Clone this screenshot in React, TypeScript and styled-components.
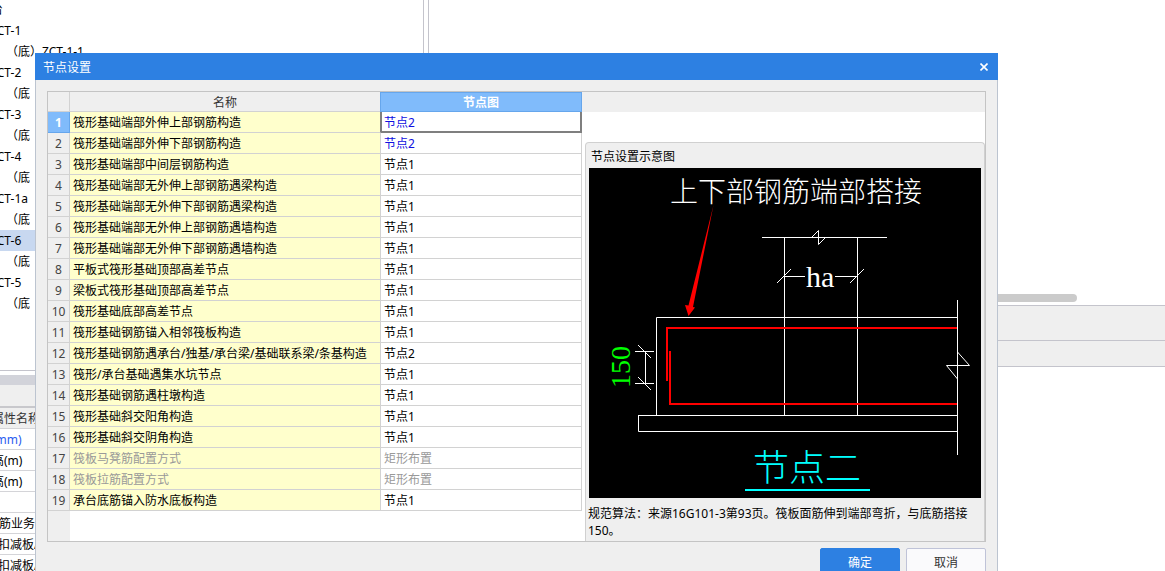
import React from "react";
import styled, { createGlobalStyle, css } from "styled-components";

const Global = createGlobalStyle`
  *, *::before, *::after { box-sizing: border-box; }
  body { margin: 0; overflow: hidden; background: #fff; }
  body, button, table {
    font-family: "Noto Sans", "Noto Sans CJK SC", sans-serif;
    font-size: 12px;
    color: #000;
  }
`;

const Page = styled.div`
  position: relative;
  display: flex;
  gap: 4px;
  height: 100vh;
  overflow: hidden;
`;

const Side = styled.aside`
  display: flex;
  flex-direction: column;
  width: 424px;
  border-right: 1px solid #c4c4cc;
  overflow: hidden;
  white-space: nowrap;
`;

const Tree = styled.ul`
  list-style: none;
  flex: none;
  height: 371px;
  margin: 0;
  padding: 0;
  overflow: hidden;
  border-bottom: 1px solid #c4c4cc;
`;

const TreeItem = styled.li<{ $indent: number; $selected?: boolean }>`
  height: 21px;
  padding-top: 1px;
  line-height: 20px;
  text-indent: ${(p) => p.$indent}px;
  background: ${(p) => (p.$selected ? "#c8d8f0" : "transparent")};
  &:first-child { margin-top: -1px; }
`;

const SideScroll = styled.div`
  flex: none;
  height: 10px;
  margin-top: 4px;
  background: #d2d3da;
`;

const SideCaption = styled.div`
  flex: none;
  height: 23px;
  background: #efefef;
  border-bottom: 2px solid #c8c8cc;
`;

const PropRow = styled.div<{ $indent: number; $tone?: "head" | "link" }>`
  flex: none;
  height: 21px;
  line-height: 21px;
  text-indent: ${(p) => p.$indent}px;
  border-bottom: 1px solid #d4d4d8;
  ${(p) => p.$tone === "head" && css`background: #efefef; color: #333;`}
  ${(p) => p.$tone === "link" && css`color: #2a5cf0;`}
`;

const Workspace = styled.main`
  flex: 1;
  display: flex;
  flex-direction: column;
  border-left: 1px solid #c4c4cc;
`;

const Canvas = styled.div`
  display: flex;
  align-items: flex-end;
  height: 305px;
  padding-bottom: 3px;
`;

const ScrollThumb = styled.div`
  width: 648px;
  height: 8px;
  border-radius: 4px;
  background: #cbcbcb;
`;

const Strip = styled.div<{ $height: number }>`
  height: ${(p) => p.$height}px;
  background: #efefef;
  border-top: 1px solid #c4c4cc;
`;

const Below = styled.div`
  flex: 1;
  border-top: 1px solid #c4c4cc;
`;

const Dialog = styled.section`
  position: absolute;
  top: 53px;
  left: 35px;
  right: 167px;
  background: #efefef;
`;

const TitleBar = styled.header`
  display: flex;
  align-items: center;
  justify-content: space-between;
  height: 27px;
  padding: 0 8px;
  background: #2d80e2;
  color: #fff;
`;

const Title = styled.h1`
  margin: 0;
  font-size: 12px;
  font-weight: 400;
`;

const CloseButton = styled.button`
  display: flex;
  align-items: center;
  justify-content: center;
  width: 12px;
  height: 20px;
  padding: 0;
  border: 0;
  background: none;
`;

const DialogBody = styled.div`
  padding: 11px 11px 12px;
  border: 1px solid #bcc4d0;
  border-top: 0;
`;

const Frame = styled.div`
  display: flex;
  height: 451px;
  border: 1px solid #c4c4c4;
  background: #fff;
`;

const GridPane = styled.div`
  display: flex;
  flex-direction: column;
  width: 534px;
`;

const GridFiller = styled.div`
  flex: 1;
  width: 22px;
  background: #efefef;
`;

const Grid = styled.table`
  width: 100%;
  table-layout: fixed;
  border-collapse: separate;
  border-spacing: 0;
`;

const line = "#d2d2d2";

const ColHead = styled.th<{ $active?: boolean }>`
  height: 20px;
  padding: 2px 0 0;
  line-height: 17px;
  font-weight: 400;
  color: #333;
  background: #efefef;
  border: solid ${line};
  border-width: 0 1px 1px 0;
  ${(p) =>
    p.$active &&
    css`
      padding-top: 1px;
      font-weight: 700;
      color: #fff;
      background: #80bbfb;
      border: 1px solid #66a6ec;
      border-left: 0;
      box-shadow: -1px 0 0 #66a6ec;
    `}
`;

const RowHead = styled.th<{ $active?: boolean }>`
  height: 21px;
  padding: 3px 0 0;
  line-height: 16px;
  vertical-align: top;
  font-weight: ${(p) => (p.$active ? 700 : 400)};
  color: ${(p) => (p.$active ? "#fff" : "#444")};
  background: ${(p) => (p.$active ? "#80bbfb" : "#efefef")};
  border: solid ${(p) => (p.$active ? "#66a6ec" : line)};
  border-width: 0 1px 1px 0;
`;

type Tone = "normal" | "link" | "off";
const tones: Record<Tone, string> = { normal: "#000", link: "#0f0fe0", off: "#999" };

const Cell = styled.td<{ $tone: Tone }>`
  height: 21px;
  padding: 3px 0 0 3px;
  line-height: 16px;
  vertical-align: top;
  white-space: nowrap;
  color: ${(p) => tones[p.$tone]};
  border: solid ${line};
  border-width: 0 1px 1px 0;
`;

const NameCell = styled(Cell)<{ $active?: boolean }>`
  background: #ffffcc;
  ${(p) => p.$active && css`border-right-color: #7f7f7f;`}
`;

const NodeCell = styled(Cell)<{ $active?: boolean }>`
  ${(p) =>
    p.$active &&
    css`
      padding-left: 2px;
      border: solid #7f7f7f;
      border-width: 0 2px 2px 1px;
    `}
`;

const PreviewPane = styled.div`
  flex: 1;
  display: flex;
  flex-direction: column;
`;

const HeadFill = styled.div`
  height: 20px;
  margin-bottom: 30px;
  background: #efefef;
`;

const Preview = styled.section`
  flex: 1;
  margin-left: 3px;
  padding: 0 3px;
  background: #efefef;
  border: 1px solid #d0d0d0;
  border-bottom: 0;
  border-radius: 4px 4px 0 0;
`;

const PreviewTitle = styled.h2`
  margin: 0;
  padding-left: 2px;
  height: 25px;
  line-height: 28px;
  font-size: 12px;
  font-weight: 400;
`;

const Drawing = styled.svg`
  display: block;
  width: 100%;
  height: 330px;
  background: #000;
`;

const Note = styled.p`
  margin: 7px 0 0 -1px;
  line-height: 17px;
`;

const Actions = styled.footer`
  display: flex;
  justify-content: flex-end;
  gap: 6px;
  padding-top: 6px;
`;

const ActionButton = styled.button<{ $primary?: boolean }>`
  width: 80px;
  height: 28px;
  padding: 0;
  border-radius: 2px;
  border: 1px solid ${(p) => (p.$primary ? "#2d80e2" : "#bfc3d8")};
  background: ${(p) => (p.$primary ? "#2d80e2" : "#fafafc")};
  color: ${(p) => (p.$primary ? "#fff" : "#333")};
`;

const tree: { text: string; indent: number; selected?: boolean }[] = [
  { text: "承台", indent: -21 },
  { text: "ZCT-1", indent: -10 },
  { text: "（底）ZCT-1-1", indent: 6 },
  { text: "ZCT-2", indent: -10 },
  { text: "（底", indent: 6 },
  { text: "ZCT-3", indent: -10 },
  { text: "（底", indent: 6 },
  { text: "ZCT-4", indent: -10 },
  { text: "（底", indent: 6 },
  { text: "ZCT-1a", indent: -10 },
  { text: "（底", indent: 6 },
  { text: "ZCT-6", indent: -10, selected: true },
  { text: "（底", indent: 6 },
  { text: "ZCT-5", indent: -10 },
  { text: "（底", indent: 6 },
];

const props: { text: string; indent: number; tone?: "head" | "link" }[] = [
  { text: "属性名称", indent: -8, tone: "head" },
  { text: "(mm)", indent: -8, tone: "link" },
  { text: "高(m)", indent: -8 },
  { text: "高(m)", indent: -8 },
  { text: "", indent: 0 },
  { text: "筋业务", indent: -1 },
  { text: "扣减板/", indent: -2 },
  { text: "扣减板/", indent: -2 },
];

const rows: [string, string, Tone?][] = [
  ["筏形基础端部外伸上部钢筋构造", "节点2", "link"],
  ["筏形基础端部外伸下部钢筋构造", "节点2", "link"],
  ["筏形基础端部中间层钢筋构造", "节点1"],
  ["筏形基础端部无外伸上部钢筋遇梁构造", "节点1"],
  ["筏形基础端部无外伸下部钢筋遇梁构造", "节点1"],
  ["筏形基础端部无外伸上部钢筋遇墙构造", "节点1"],
  ["筏形基础端部无外伸下部钢筋遇墙构造", "节点1"],
  ["平板式筏形基础顶部高差节点", "节点1"],
  ["梁板式筏形基础顶部高差节点", "节点1"],
  ["筏形基础底部高差节点", "节点1"],
  ["筏形基础钢筋锚入相邻筏板构造", "节点1"],
  ["筏形基础钢筋遇承台/独基/承台梁/基础联系梁/条基构造", "节点2"],
  ["筏形/承台基础遇集水坑节点", "节点1"],
  ["筏形基础钢筋遇柱墩构造", "节点1"],
  ["筏形基础斜交阳角构造", "节点1"],
  ["筏形基础斜交阴角构造", "节点1"],
  ["筏板马凳筋配置方式", "矩形布置", "off"],
  ["筏板拉筋配置方式", "矩形布置", "off"],
  ["承台底筋锚入防水底板构造", "节点1"],
];

const serif = '"Liberation Serif", "Noto Sans CJK SC", serif';
const cjk = '"Noto Sans CJK SC", sans-serif';

function NodeDrawing() {
  return (
    <Drawing viewBox="0 0 392 330" role="img" aria-label="节点二">
      <text x="81" y="34" fontSize="28" fontWeight="300" fontFamily={cjk} fill="#fff">上下部钢筋端部搭接</text>
      {/* column with its break mark and the width dimension */}
      <g stroke="#fff" fill="none">
        <path d="M173 69.500H298M195.500 69V247M268.500 69V247" />
        <path d="M222.500 69.500L229.500 62.500V76.500L236.500 69.500" />
        <path d="M195 108.500H216M246 108.500H269M188 115L202 101M261 115L275 101" />
        {/* raft outline and bedding */}
        <path d="M67.500 247V149.500H368M49.500 247.500H368M49.500 247V263.500H368" />
        <path d="M368.500 132V287M368.500 184L380.500 197.500H357.500L368.500 211" />
        {/* 150 dimension */}
        <path d="M46 183.500H65M46 215.500H65M56.500 183V216M49 177L62 190M49 209L62 222" />
      </g>
      {/* rebars */}
      <g stroke="#f00" strokeWidth="2" fill="none">
        <path d="M78 213V160H368" />
        <path d="M81 183V236H368" />
      </g>
      <path d="M124.500 37L104 139L106 139.500L99.500 148L96 137L99.500 137.500Z" fill="#f00" />
      <text x="217" y="119" fontSize="30" fontFamily={serif} fill="#fff">ha</text>
      <text transform="translate(41 220) rotate(-90)" fontSize="28" fontFamily={serif} fill="#0f0">150</text>
      <text x="164" y="313" fontSize="36" fontWeight="300" fontFamily={cjk} fill="#0ff">节点二</text>
      <path d="M156 322H281" stroke="#0ff" strokeWidth="2" />
    </Drawing>
  );
}

export default function App() {
  return (
    <>
      <Global />
      <Page>
        <Side>
          <Tree>
            {tree.map((t, i) => (
              <TreeItem key={i} $indent={t.indent} $selected={t.selected}>{t.text}</TreeItem>
            ))}
          </Tree>
          <SideScroll />
          <SideCaption />
          {props.map((p, i) => (
            <PropRow key={i} $indent={p.indent} $tone={p.tone}>{p.text}</PropRow>
          ))}
        </Side>
        <Workspace>
          <Canvas><ScrollThumb /></Canvas>
          <Strip $height={35} />
          <Strip $height={26} />
          <Below />
        </Workspace>

        <Dialog role="dialog" aria-labelledby="dialog-title">
          <TitleBar>
            <Title id="dialog-title">节点设置</Title>
            <CloseButton type="button" aria-label="关闭">
              <svg width="8" height="8" viewBox="0 0 8 8" stroke="#fff" strokeWidth="1.6">
                <path d="M0.500 0.500L7.500 7.500M7.500 0.500L0.500 7.500" />
              </svg>
            </CloseButton>
          </TitleBar>
          <DialogBody>
            <Frame>
              <GridPane>
                <Grid>
                  <colgroup>
                    <col width="22" />
                    <col width="311" />
                    <col width="201" />
                  </colgroup>
                  <thead>
                    <tr>
                      <ColHead />
                      <ColHead scope="col">名称</ColHead>
                      <ColHead scope="col" $active>节点图</ColHead>
                    </tr>
                  </thead>
                  <tbody>
                    {rows.map(([name, node, tone = "normal"], i) => (
                      <tr key={name}>
                        <RowHead scope="row" $active={i === 0}>{i + 1}</RowHead>
                        <NameCell $tone={tone === "off" ? "off" : "normal"} $active={i === 0}>{name}</NameCell>
                        <NodeCell $tone={tone} $active={i === 0}>{node}</NodeCell>
                      </tr>
                    ))}
                  </tbody>
                </Grid>
                <GridFiller />
              </GridPane>
              <PreviewPane>
                <HeadFill />
                <Preview>
                  <PreviewTitle>节点设置示意图</PreviewTitle>
                  <NodeDrawing />
                  <Note>规范算法：来源16G101-3第93页。筏板面筋伸到端部弯折，与底筋搭接150。</Note>
                </Preview>
              </PreviewPane>
            </Frame>
            <Actions>
              <ActionButton type="button" $primary>确定</ActionButton>
              <ActionButton type="button">取消</ActionButton>
            </Actions>
          </DialogBody>
        </Dialog>
      </Page>
    </>
  );
}
